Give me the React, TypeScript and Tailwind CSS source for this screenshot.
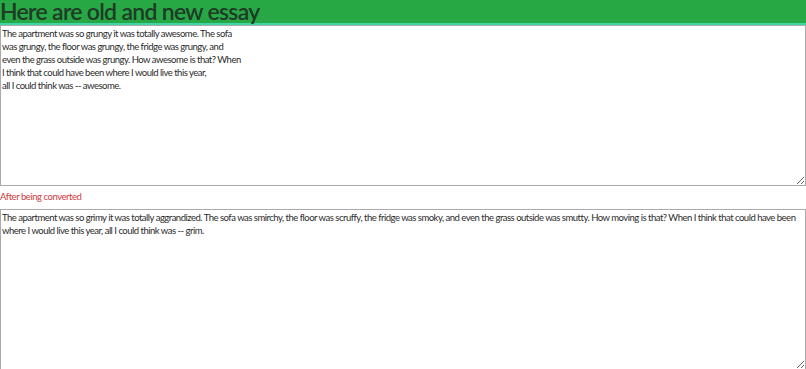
import { useState } from 'react';

const OLD_ESSAY = `The apartment was so grungy it was totally awesome. The sofa
was grungy, the floor was grungy, the fridge was grungy, and
even the grass outside was grungy. How awesome is that? When
I think that could have been where I would live this year,
all I could think was -- awesome.`;

const NEW_ESSAY =
    'The apartment was so grimy it was totally aggrandized. The sofa was smirchy, the floor was scruffy, the fridge was smoky, and even the grass outside was smutty. How moving is that? When I think that could have been where I would live this year, all I could think was -- grim.';

export default function App() {
    const [oldText, setOldText] = useState(OLD_ESSAY);
    const [newText, setNewText] = useState(NEW_ESSAY);

    return (
        <div className="flex flex-col w-full bg-white font-['Lato','Noto_Sans',sans-serif]">
            {/* Header */}
            <h1 className="h-[25px] bg-[#28a745] border-b-2 border-[#3fd6a6] text-[23px] leading-[23px] tracking-[-0.7px] font-semibold text-[#1d3b26] whitespace-nowrap">
                Here are old and new essay
            </h1>

            {/* Original essay */}
            <textarea
                value={oldText}
                onChange={(e) => setOldText(e.target.value)}
                className="block w-full h-[161px] px-[1px] py-[1px] border border-[#aaaaaa] text-[9.5px] leading-[13px] tracking-[-0.5px] text-[#2b2b2b] font-['Lato','Noto_Sans',sans-serif] outline-none"
            />

            {/* Label */}
            <p className="mt-[5px] mb-[7px] text-[9.5px] leading-[11px] tracking-[-0.45px] text-[#d0393e]">After being converted</p>

            {/* Converted essay */}
            <textarea
                value={newText}
                onChange={(e) => setNewText(e.target.value)}
                className="block w-full h-[161px] px-[1px] py-[1px] border border-[#aaaaaa] text-[9.5px] leading-[13px] tracking-[-0.5px] text-[#2b2b2b] font-['Lato','Noto_Sans',sans-serif] outline-none"
            />
        </div>
    );
}
